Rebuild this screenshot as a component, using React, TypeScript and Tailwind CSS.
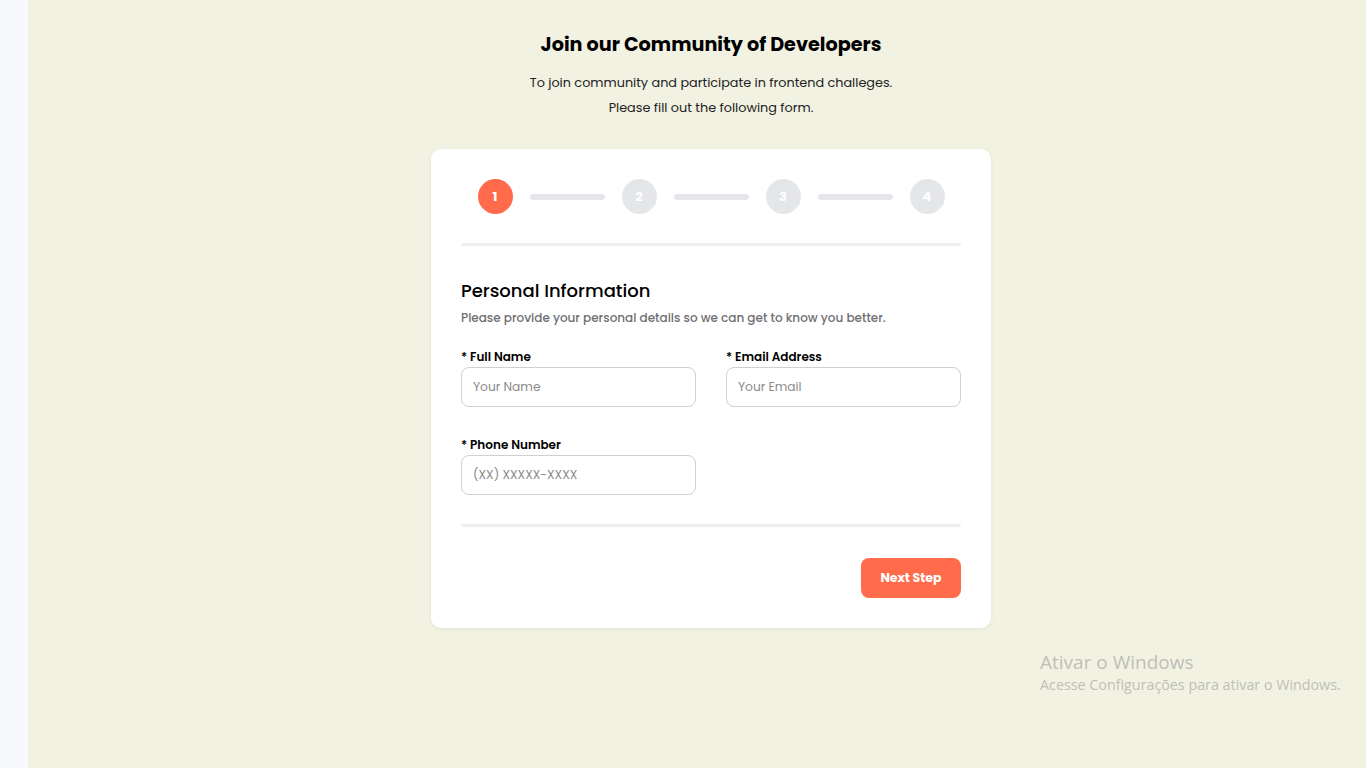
import React from "react";

const font = { fontFamily: "Poppins, Inter, 'Noto Sans', sans-serif" };

function Step({ n, active }: { n: number; active?: boolean }) {
  return (
    <div
      className={`w-[35px] h-[35px] rounded-full flex items-center justify-center text-[13px] font-bold text-white ${
        active ? "bg-[#ff6b4b]" : "bg-[#e5e6ea]"
      }`}
    >
      {n}
    </div>
  );
}

function Line() {
  return <div className="w-[75px] h-[6px] rounded-full bg-[#e5e6ea]" />;
}

function Field({ label, placeholder }: { label: string; placeholder: string }) {
  return (
    <div className="flex flex-col w-[235px]">
      <label className="text-[12px] font-semibold text-black leading-[20px]">
        * {label}
      </label>
      <input
        placeholder={placeholder}
        className="h-[40px] rounded-[8px] border border-[#cfd0d4] px-[11px] text-[12.2px] text-black placeholder:text-[#8a8a8a] outline-none"
        style={font}
      />
    </div>
  );
}

export default function App() {
  return (
    <div className="flex min-h-[768px] w-full" style={font}>
      {/* left strip */}
      <div className="w-[28px] bg-[#f8f9fc]" />

      {/* MAIN */}
      <main className="relative flex-1 bg-[#f2f2e3] pl-[28px] pt-[31px]">
        <div className="flex flex-col items-center">
          <h1 className="text-[19.2px] leading-[28px] font-bold text-black">
            Join our Community of Developers
          </h1>
          <p className="mt-[11px] text-[12.8px] leading-[25px] text-[#222] text-center">
            To join community and participate in frontend challeges.
            <br />
            Please fill out the following form.
          </p>

          {/* CARD */}
          <div className="mt-[29px] w-[560px] bg-white rounded-[10px] shadow-[0_1px_4px_rgba(0,0,0,0.06)] p-[30px]">
            <div className="flex items-center justify-center gap-[17px]">
              <Step n={1} active />
              <Line />
              <Step n={2} />
              <Line />
              <Step n={3} />
              <Line />
              <Step n={4} />
            </div>

            <div className="mt-[29px] h-[3px] rounded-full bg-[#efeff3]" />

            <h2 className="mt-[31px] text-[18px] leading-[28px] font-medium text-black">
              Personal Information
            </h2>
            <p className="mt-[3px] text-[12px] leading-[20px] font-medium text-[#6f6f73]">
              Please provide your personal details so we can get to know you better.
            </p>

            <div className="mt-[19px] grid grid-cols-2 gap-x-[30px] gap-y-[28px]">
              <Field label="Full Name" placeholder="Your Name" />
              <Field label="Email Address" placeholder="Your Email" />
              <Field label="Phone Number" placeholder="(XX) XXXXX-XXXX" />
            </div>

            <div className="mt-[29px] h-[3px] rounded-full bg-[#efeff3]" />

            <div className="mt-[31px] flex justify-end">
              <button className="w-[100px] h-[40px] rounded-[8px] bg-[#ff6b4b] text-white text-[12.5px] font-bold">
                Next Step
              </button>
            </div>
          </div>
        </div>

        {/* windows watermark */}
        <div
          className="absolute left-[1012px] top-[650px] text-[#bfbfb6]"
          style={{ fontFamily: "'Open Sans', 'Noto Sans', sans-serif" }}
        >
          <div className="text-[19px] leading-[25px]">Ativar o Windows</div>
          <div className="text-[14.3px] leading-[20px]">
            Acesse Configurações para ativar o Windows.
          </div>
        </div>
      </main>
    </div>
  );
}
